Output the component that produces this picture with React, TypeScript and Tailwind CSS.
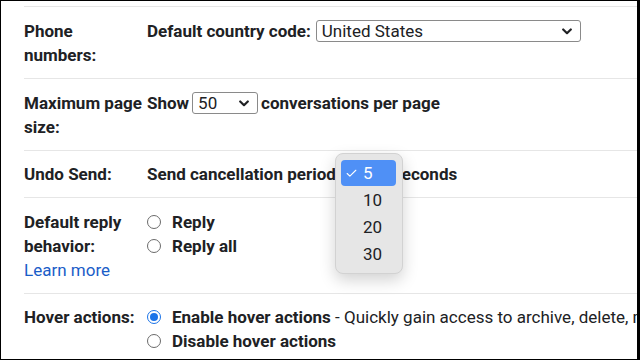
import { Check } from 'lucide-react';

const Chevron = () => (
    <svg width="10" height="7" viewBox="0 0 10 7" className="shrink-0">
        <path d="M1.2 1.5 L5 5.2 L8.8 1.5" fill="none" stroke="#202124" strokeWidth="2.2" strokeLinecap="round" strokeLinejoin="round" />
    </svg>
);

const FakeSelect = ({ value, className }: { value: string; className: string }) => (
    <div className={`inline-flex items-center justify-between h-[22px] border border-[#8a8a8a] rounded-[3px] bg-white pl-[5px] pr-[8px] font-normal shrink-0 ${className}`}>
        <span>{value}</span>
        <Chevron />
    </div>
);

const Radio = ({ checked }: { checked?: boolean }) => (
    <span className={`inline-flex items-center justify-center w-[14px] h-[14px] rounded-full border shrink-0 ${checked ? 'border-[#1a73e8]' : 'border-[#6b6b6b]'}`}>
        {checked && <span className="w-[8px] h-[8px] rounded-full bg-[#1a73e8]" />}
    </span>
);

const Row = ({ label, children, pad = 'pt-[12px]' }: { label: React.ReactNode; children: React.ReactNode; pad?: string }) => (
    <div className={`flex border-t border-[#e6e6e6] pb-[11px] ${pad}`}>
        <div className="w-[123px] shrink-0 font-bold whitespace-nowrap">{label}</div>
        <div className="flex-1 min-w-0 whitespace-nowrap">{children}</div>
    </div>
);

const RadioLine = ({ checked, children }: { checked?: boolean; children: React.ReactNode }) => (
    <div className="flex items-center gap-[11px]">
        <Radio checked={checked} />
        <span>{children}</span>
    </div>
);

export default function App() {
    return (
        <div className="w-[640px] h-[360px] overflow-hidden bg-white border-t border-l border-b border-r-[3px] border-black">
            <div
                className="relative pl-[23px] pt-[5px] text-[17px] leading-[24px] text-[#202124] w-[720px]"
                style={{ fontFamily: 'Roboto, "Liberation Sans", sans-serif' }}
            >
                <Row label={<>Phone<br />numbers:</>}>
                    <div className="flex items-center">
                        <span className="font-bold">Default country code:</span>
                        <FakeSelect value="United States" className="ml-[5px] w-[265px]" />
                    </div>
                </Row>
                <Row label={<>Maximum page<br />size:</>}>
                    <div className="flex items-center font-bold">
                        <span>Show</span>
                        <FakeSelect value="50" className="ml-[3px] w-[66px]" />
                        <span className="ml-[3px]">conversations per page</span>
                    </div>
                </Row>
                <Row label="Undo Send:" pad="pt-[11px]">
                    <div className="flex items-center font-bold">
                        <span className="w-[190px] shrink-0">Send cancellation period:</span>
                        <FakeSelect value="5" className="ml-[4px] w-[50px]" />
                        <span className="ml-[2px]">seconds</span>
                    </div>
                </Row>
                <Row label={<>Default reply<br />behavior:<br /><a className="font-normal text-[#1a5dc8]">Learn more</a></>}>
                    <div className="font-bold">
                        <RadioLine>Reply</RadioLine>
                        <RadioLine>Reply all</RadioLine>
                    </div>
                </Row>
                <Row label="Hover actions:" pad="pt-[11px]">
                    <div>
                        <RadioLine checked><span className="font-bold">Enable hover actions</span> - Quickly gain access to archive, delete, mark as read</RadioLine>
                        <RadioLine><span className="font-bold">Disable hover actions</span></RadioLine>
                    </div>
                </Row>

                <div className="absolute left-[334px] top-[152px] w-[68px] h-[121px] rounded-[8px] bg-[#e6e6e6] border border-[#d2d2d2] shadow-[0_6px_16px_rgba(0,0,0,0.18)] pl-[5px] pr-[6px] pt-[6px]">
                    <div className="flex items-center h-[26px] rounded-[4px] bg-[#4f90f6] text-white pl-[4px]">
                        <Check size={13} strokeWidth={2} />
                        <span className="ml-[5px]">5</span>
                    </div>
                    <div className="h-[27px] flex items-center pl-[22px]">10</div>
                    <div className="h-[27px] flex items-center pl-[22px]">20</div>
                    <div className="h-[27px] flex items-center pl-[22px]">30</div>
                </div>
            </div>
        </div>
    );
}
